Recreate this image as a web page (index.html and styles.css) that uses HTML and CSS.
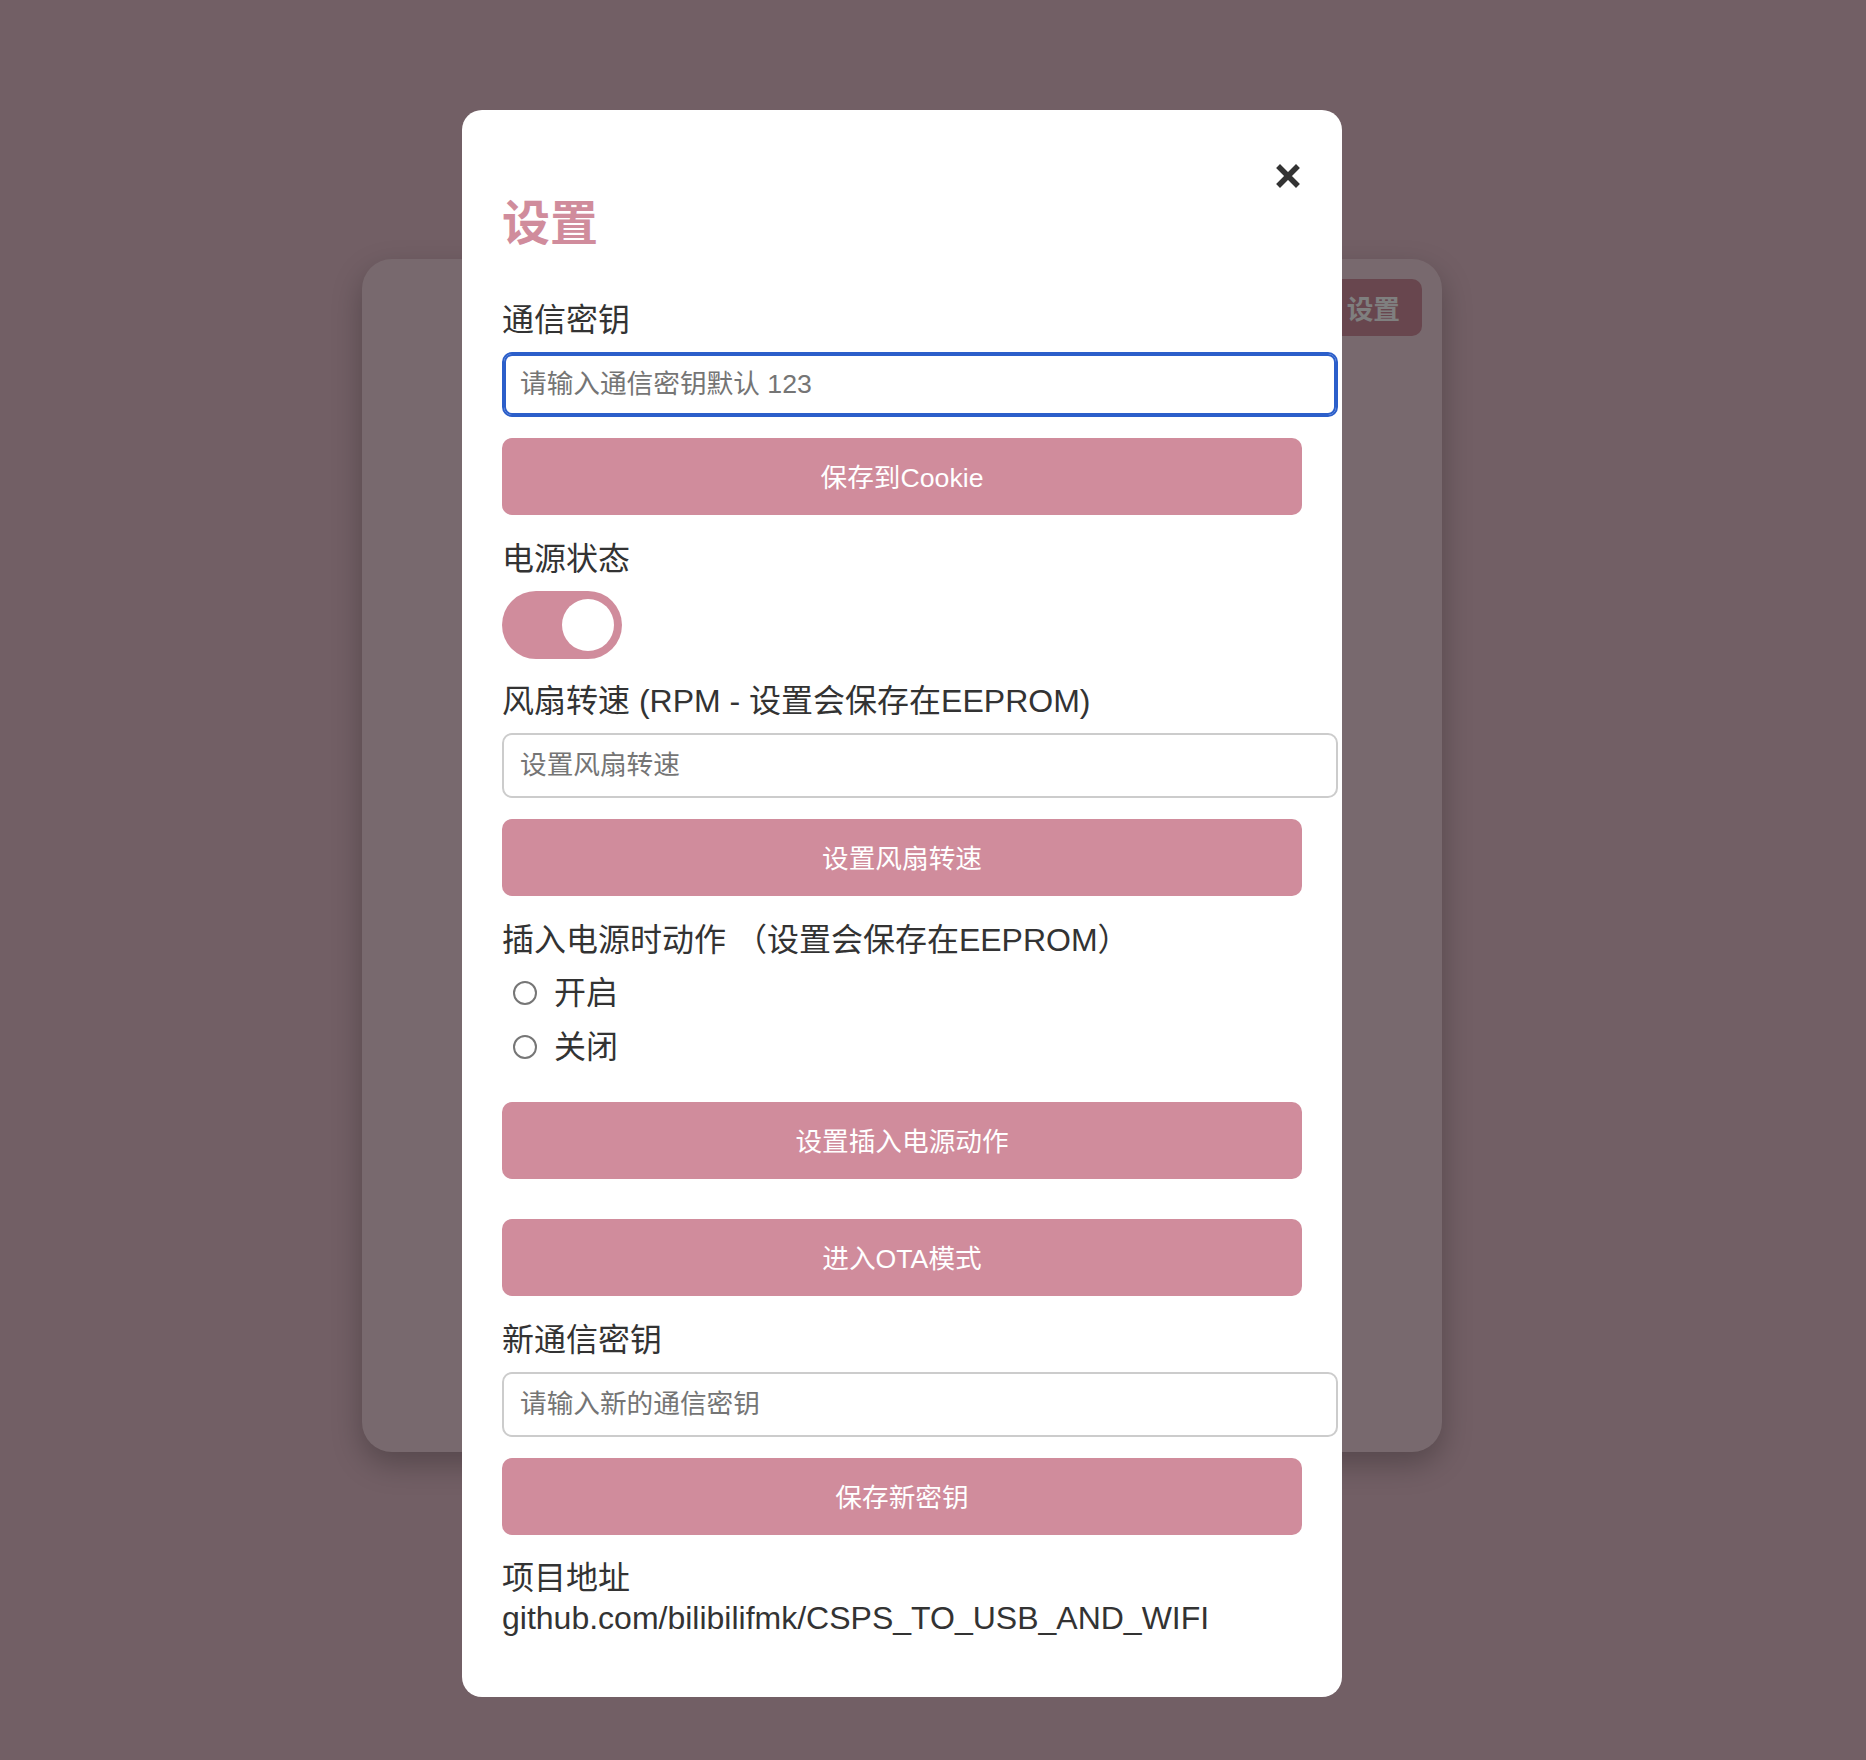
FILE: index.html
```html
<!DOCTYPE html>
<html lang="zh-CN">
<head>
    <meta charset="UTF-8">
    <meta name="viewport" content="width=device-width, initial-scale=1.0">
    <title>CSPS 控制面板</title>
    <link rel="stylesheet" href="styles.css">
</head>
<body>

    <div class="page">
        <div class="card">
            <div class="card-head">
                <button class="settings-btn" type="button">设置</button>
            </div>
        </div>
    </div>

    <!-- Settings modal -->
    <div class="overlay">
        <div class="modal">
            <div class="close-row">
                <button class="close-btn" type="button" aria-label="关闭">
                    <svg width="24" height="24" viewBox="0 0 24 24">
                        <path d="M4 4 L20 20 M20 4 L4 20" stroke="#333" stroke-width="5.5" stroke-linecap="square" fill="none"/>
                    </svg>
                </button>
            </div>
            <h2 class="modal-title">设置</h2>

            <label class="field-label" for="key">通信密钥</label>
            <input class="text-input focused" type="text" id="key" placeholder="请输入通信密钥默认 123">
            <button class="action-btn" type="button">保存到Cookie</button>

            <div class="field-label">电源状态</div>
            <div class="switch on"><span class="knob"></span></div>

            <label class="field-label" for="fan">风扇转速 (RPM - 设置会保存在EEPROM)</label>
            <input class="text-input" type="text" id="fan" placeholder="设置风扇转速">
            <button class="action-btn" type="button">设置风扇转速</button>

            <div class="field-label">插入电源时动作 （设置会保存在EEPROM）</div>
            <div class="radio-group">
                <label class="radio-row"><input type="radio" name="plug" value="on"> 开启</label>
                <label class="radio-row"><input type="radio" name="plug" value="off"> 关闭</label>
            </div>
            <button class="action-btn" type="button">设置插入电源动作</button>

            <button class="action-btn ota" type="button">进入OTA模式</button>

            <label class="field-label" for="newkey">新通信密钥</label>
            <input class="text-input" type="text" id="newkey" placeholder="请输入新的通信密钥">
            <button class="action-btn" type="button">保存新密钥</button>

            <p class="project">项目地址<br>github.com/bilibilifmk/CSPS_TO_USB_AND_WIFI</p>
        </div>
    </div>

</body>
</html>
```

FILE: styles.css
```css
:root {
    --pink: #d08c9c;
    --page-bg: #e4beca;
    --card-bg: #f0d3dc;
    --text: #333;
    --muted: #767676;
    --border: #ccc;
    --focus: #2c5fca;
}
* { margin: 0; padding: 0; box-sizing: border-box; }
body { font-family: "Liberation Sans", "Noto Sans CJK SC", sans-serif; background-color: var(--page-bg); color: var(--text); min-height: 1760px; }

/* --- page behind the modal --- */
.page { padding-top: 259px; }
.card { width: 1080px; height: 1193px; margin-left: 362px; background-color: var(--card-bg); border-radius: 30px; box-shadow: 0 12px 30px rgba(0, 0, 0, 0.25); padding: 20px; }
.card-head { display: flex; justify-content: flex-end; }
.settings-btn { height: 57px; padding: 0 22px; background-color: var(--pink); color: #fff; border: none; border-radius: 10px; font-family: inherit; font-size: 26.67px; font-weight: 600; }

/* --- modal --- */
.overlay { position: fixed; inset: 0; background-color: rgba(0, 0, 0, 0.5); }
.modal { position: absolute; top: 110px; left: 462px; width: 880px; background-color: #fff; border-radius: 20px; padding: 40px 40px 59px; }
.close-row { display: flex; justify-content: flex-end; }
.close-btn { display: block; width: 24px; height: 24px; margin-top: 14px; margin-right: 2px; background: none; border: none; cursor: pointer; }
.close-btn svg { display: block; }
.modal-title { margin-top: 8px; margin-bottom: 48px; color: var(--pink); font-size: 48px; line-height: 56px; font-weight: 700; }

.field-label { display: block; font-size: 32px; line-height: 40px; margin-top: 24px; margin-bottom: 12px; }
.modal-title + .field-label { margin-top: 0; }

.text-input { display: block; width: 100%; box-sizing: content-box; height: 29px; padding: 16px; border: 2px solid var(--border); border-radius: 10px; font-family: inherit; font-size: 26.67px; color: var(--text); background: #fff; outline: none; }
.text-input::placeholder { color: #757575; }
.text-input.focused { border-color: var(--focus); box-shadow: inset 0 0 0 2px var(--focus); }

.action-btn { display: block; width: 100%; height: 77px; margin-top: 21px; padding-bottom: 2px; background-color: var(--pink); color: #fff; border: none; border-radius: 10px; font-family: inherit; font-size: 26.67px; cursor: pointer; }
.action-btn.ota { margin-top: 40px; }

.switch { position: relative; width: 120px; height: 68px; border-radius: 34px; background-color: #ccc; }
.switch.on { background-color: var(--pink); }
.switch .knob { position: absolute; top: 8px; left: 8px; width: 52px; height: 52px; border-radius: 50%; background-color: #fff; }
.switch.on .knob { left: 60px; }
.switch + .field-label { margin-top: 22px; }

.radio-group { display: flex; flex-direction: column; gap: 14px; margin-top: 13px; margin-bottom: 35px; }
.radio-row { display: flex; align-items: center; font-size: 32px; line-height: 40px; }
.radio-row input { appearance: none; width: 24px; height: 24px; margin: 0 17px 0 11px; border: 2px solid var(--muted); border-radius: 50%; background: #fff; }

.project { font-size: 32px; line-height: 40px; margin-top: 23px; }
```
